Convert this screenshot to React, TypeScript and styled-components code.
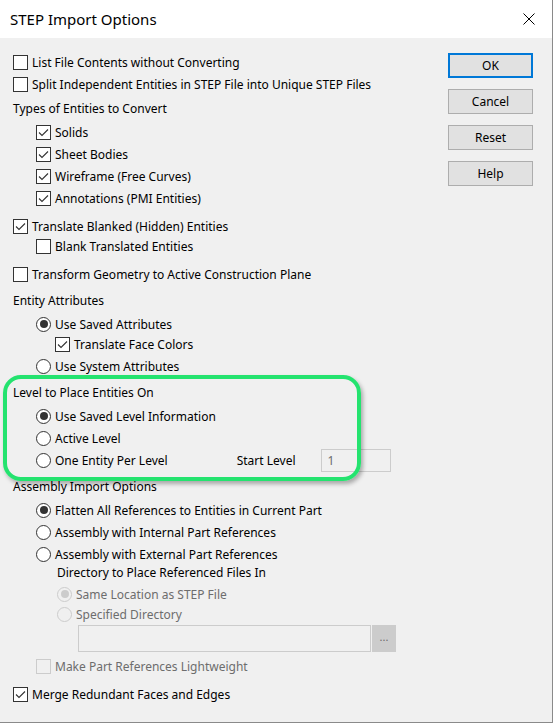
import styled, { createGlobalStyle } from 'styled-components';

const GlobalStyle = createGlobalStyle`
  html, body {
    margin: 0;
    padding: 0;
    background: #f0f0f0;
  }
  body {
    font-family: 'Noto Sans', 'Liberation Sans', sans-serif;
    font-size: 12px;
    color: #000;
  }
`;

const StyledDialog = styled.div`
  position: relative;
  width: 553px;
  height: 723px;
  box-sizing: border-box;
  background-color: #f0f0f0;
  border-right: 1px solid #8a8a8a;
  border-bottom: 1px solid #8a8a8a;
  overflow: hidden;
`;

const StyledTitleBar = styled.div`
  display: flex;
  align-items: center;
  height: 38px;
  padding-left: 10px;
  background-color: #fff;
  font-size: 15px;
`;

const StyledTitle = styled.div`
  flex: 1;
`;

const StyledClose = styled.div`
  display: flex;
  align-items: center;
  justify-content: center;
  width: 46px;
  height: 38px;
`;

const StyledBody = styled.div`
  display: flex;
`;

const StyledOptions = styled.div`
  width: 430px;
  padding: 14px 0 0 13px;
`;

const StyledButtons = styled.div`
  display: flex;
  flex-direction: column;
  gap: 11px;
  padding: 15px 0 0 5px;
`;

const StyledButton = styled.button<{ $default?: boolean }>`
  width: 85px;
  height: 25px;
  box-sizing: border-box;
  padding: 0;
  font-family: inherit;
  font-size: 12px;
  color: #000;
  background-color: #e1e1e1;
  border: ${({ $default }) => ($default ? '2px solid #0078d7' : '1px solid #adadad')};
`;

const StyledRow = styled.div<{ $top?: number; $indent?: number; $height?: number }>`
  display: flex;
  align-items: center;
  gap: 4px;
  height: ${({ $height }) => $height ?? 20}px;
  margin-top: ${({ $top }) => $top ?? 2}px;
  padding-left: ${({ $indent }) => $indent ?? 0}px;
  white-space: nowrap;
`;

const StyledLabel = styled.span<{ $disabled?: boolean }>`
  color: ${({ $disabled }) => ($disabled ? '#6d6d6d' : '#000')};
`;

const StyledBox = styled.span<{ $disabled?: boolean }>`
  display: inline-flex;
  align-items: center;
  justify-content: center;
  flex: none;
  width: 15px;
  height: 15px;
  box-sizing: border-box;
  border: 1px solid ${({ $disabled }) => ($disabled ? '#cccccc' : '#333')};
  background-color: ${({ $disabled }) => ($disabled ? '#f0f0f0' : '#fff')};
`;

const StyledRadio = styled.span<{ $disabled?: boolean }>`
  display: inline-flex;
  align-items: center;
  justify-content: center;
  flex: none;
  width: 15px;
  height: 15px;
  box-sizing: border-box;
  border-radius: 50%;
  border: 1px solid ${({ $disabled }) => ($disabled ? '#cccccc' : '#333')};
  background-color: ${({ $disabled }) => ($disabled ? '#f0f0f0' : '#fff')};
`;

const StyledDot = styled.span<{ $disabled?: boolean }>`
  width: 8px;
  height: 8px;
  border-radius: 50%;
  background-color: ${({ $disabled }) => ($disabled ? '#cccccc' : '#333')};
`;

const StyledSpacer = styled.span<{ $width: number }>`
  width: ${({ $width }) => $width}px;
  flex: none;
`;

const StyledLevelInput = styled.div`
  width: 70px;
  height: 23px;
  box-sizing: border-box;
  padding-left: 6px;
  display: flex;
  align-items: center;
  border: 1px solid #cccccc;
  color: #6d6d6d;
`;

const StyledPathInput = styled.div`
  width: 293px;
  height: 27px;
  box-sizing: border-box;
  border: 1px solid #cccccc;
  background-color: #f0f0f0;
`;

const StyledBrowse = styled.div`
  width: 24px;
  height: 27px;
  box-sizing: border-box;
  margin-left: -3px;
  display: flex;
  align-items: center;
  justify-content: center;
  padding-bottom: 4px;
  background-color: #cccccc;
  color: #6d6d6d;
  font-size: 11px;
`;

const StyledHighlight = styled.div`
  position: absolute;
  left: 3px;
  top: 375px;
  width: 358px;
  height: 106px;
  box-sizing: border-box;
  border: 4px solid #24e36f;
  border-radius: 18px;
  box-shadow: 2px 3px 4px rgba(0, 0, 0, 0.3);
  pointer-events: none;
`;

const CheckBox = ({ checked, disabled }: { checked?: boolean; disabled?: boolean }): JSX.Element => (
  <StyledBox $disabled={disabled}>
    {checked && (
      <svg width="13" height="13" viewBox="0 0 13 13">
        <polyline points="2,6.5 5,9.5 11,3.5" fill="none" stroke="#333" strokeWidth="1.1" />
      </svg>
    )}
  </StyledBox>
);

const Radio = ({ checked, disabled }: { checked?: boolean; disabled?: boolean }): JSX.Element => (
  <StyledRadio $disabled={disabled}>{checked && <StyledDot $disabled={disabled} />}</StyledRadio>
);

const CloseIcon = (): JSX.Element => (
  <svg width="12" height="12" viewBox="0 0 12 12">
    <path d="M0.5 0.5 L11.5 11.5 M11.5 0.5 L0.5 11.5" stroke="#000" strokeWidth="1" />
  </svg>
);

const App = (): JSX.Element => (
  <>
    <GlobalStyle />
    <StyledDialog>
      <StyledTitleBar>
        <StyledTitle>STEP Import Options</StyledTitle>
        <StyledClose>
          <CloseIcon />
        </StyledClose>
      </StyledTitleBar>
      <StyledBody>
        <StyledOptions>
          <StyledRow $top={0}>
            <CheckBox />
            <StyledLabel>List File Contents without Converting</StyledLabel>
          </StyledRow>
          <StyledRow>
            <CheckBox />
            <StyledLabel>Split Independent Entities in STEP File into Unique STEP Files</StyledLabel>
          </StyledRow>
          <StyledRow $top={4}>
            <StyledLabel>Types of Entities to Convert</StyledLabel>
          </StyledRow>
          <StyledRow $top={4} $indent={23}>
            <CheckBox checked />
            <StyledLabel>Solids</StyledLabel>
          </StyledRow>
          <StyledRow $indent={23}>
            <CheckBox checked />
            <StyledLabel>Sheet Bodies</StyledLabel>
          </StyledRow>
          <StyledRow $indent={23}>
            <CheckBox checked />
            <StyledLabel>Wireframe (Free Curves)</StyledLabel>
          </StyledRow>
          <StyledRow $indent={23}>
            <CheckBox checked />
            <StyledLabel>Annotations (PMI Entities)</StyledLabel>
          </StyledRow>
          <StyledRow $top={8}>
            <CheckBox checked />
            <StyledLabel>Translate Blanked (Hidden) Entities</StyledLabel>
          </StyledRow>
          <StyledRow $top={0} $indent={23}>
            <CheckBox />
            <StyledLabel>Blank Translated Entities</StyledLabel>
          </StyledRow>
          <StyledRow $top={8}>
            <CheckBox />
            <StyledLabel>Transform Geometry to Active Construction Plane</StyledLabel>
          </StyledRow>
          <StyledRow $top={6}>
            <StyledLabel>Entity Attributes</StyledLabel>
          </StyledRow>
          <StyledRow $top={4} $indent={23}>
            <Radio checked />
            <StyledLabel>Use Saved Attributes</StyledLabel>
          </StyledRow>
          <StyledRow $top={0} $indent={42}>
            <CheckBox checked />
            <StyledLabel>Translate Face Colors</StyledLabel>
          </StyledRow>
          <StyledRow $indent={23}>
            <Radio />
            <StyledLabel>Use System Attributes</StyledLabel>
          </StyledRow>
          <StyledRow $top={6}>
            <StyledLabel>Level to Place Entities On</StyledLabel>
          </StyledRow>
          <StyledRow $top={4} $indent={23}>
            <Radio checked />
            <StyledLabel>Use Saved Level Information</StyledLabel>
          </StyledRow>
          <StyledRow $indent={23}>
            <Radio />
            <StyledLabel>Active Level</StyledLabel>
          </StyledRow>
          <StyledRow $indent={23}>
            <Radio />
            <StyledLabel>One Entity Per Level</StyledLabel>
            <StyledSpacer $width={61} />
            <StyledLabel>Start Level</StyledLabel>
            <StyledSpacer $width={17} />
            <StyledLevelInput>1</StyledLevelInput>
          </StyledRow>
          <StyledRow $top={6}>
            <StyledLabel>Assembly Import Options</StyledLabel>
          </StyledRow>
          <StyledRow $top={4} $indent={23}>
            <Radio checked />
            <StyledLabel>Flatten All References to Entities in Current Part</StyledLabel>
          </StyledRow>
          <StyledRow $indent={23}>
            <Radio />
            <StyledLabel>Assembly with Internal Part References</StyledLabel>
          </StyledRow>
          <StyledRow $indent={23}>
            <Radio />
            <StyledLabel>Assembly with External Part References</StyledLabel>
          </StyledRow>
          <StyledRow $top={-2} $indent={44}>
            <StyledLabel>Directory to Place Referenced Files In</StyledLabel>
          </StyledRow>
          <StyledRow $indent={44}>
            <Radio checked disabled />
            <StyledLabel $disabled>Same Location as STEP File</StyledLabel>
          </StyledRow>
          <StyledRow $top={0} $indent={44}>
            <Radio disabled />
            <StyledLabel $disabled>Specified Directory</StyledLabel>
          </StyledRow>
          <StyledRow $top={0} $indent={65} $height={28}>
            <StyledPathInput />
            <StyledBrowse>...</StyledBrowse>
          </StyledRow>
          <StyledRow $top={4} $indent={23}>
            <CheckBox disabled />
            <StyledLabel $disabled>Make Part References Lightweight</StyledLabel>
          </StyledRow>
          <StyledRow $top={8}>
            <CheckBox checked />
            <StyledLabel>Merge Redundant Faces and Edges</StyledLabel>
          </StyledRow>
        </StyledOptions>
        <StyledButtons>
          <StyledButton $default>OK</StyledButton>
          <StyledButton>Cancel</StyledButton>
          <StyledButton>Reset</StyledButton>
          <StyledButton>Help</StyledButton>
        </StyledButtons>
      </StyledBody>
      <StyledHighlight />
    </StyledDialog>
  </>
);

export default App;
